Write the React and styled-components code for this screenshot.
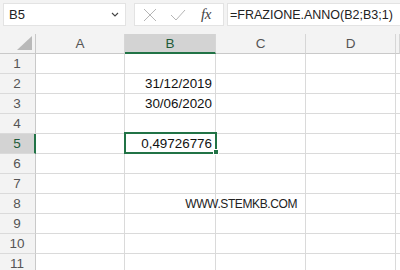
import React from "react";
import styled, { createGlobalStyle } from "styled-components";

const Global = createGlobalStyle`
  html, body { margin: 0; padding: 0; background: #fff; overflow: hidden; }
  * { box-sizing: border-box; }
`;

const GREEN = "#217346";
const FONT = `"Liberation Sans", Arial, sans-serif`;

const Page = styled.div`
  width: 400px;
  height: 270px;
  overflow: hidden;
  font-family: ${FONT};
  background: #fff;
`;

const Toolbar = styled.div`
  height: 34px;
  background: #f3f3f3;
  display: flex;
  align-items: flex-start;
  padding: 3px 0 0 3px;
  gap: 8px;
`;

const Box = styled.div`
  height: 23px;
  background: #fff;
  border: 1px solid #e3e3e3;
  display: flex;
  align-items: center;
`;

const NameBox = styled(Box)`
  width: 123px;
  padding: 0 6px 0 5px;
  justify-content: space-between;
  font-size: 13px;
  color: #222;
`;

const FxBox = styled(Box)`
  width: 90px;
  padding-left: 8px;
  gap: 13px;
`;

const FormulaBox = styled(Box)`
  flex: 1;
  margin-left: -5px;
  padding-left: 2px;
  font-size: 12.5px;
  color: #222;
  border-right: none;
  white-space: nowrap;
`;

const Fx = styled.span`
  font-family: "Liberation Serif", "Times New Roman", serif;
  font-style: italic;
  font-size: 15px;
  color: #444;
  margin-left: 2px;
  letter-spacing: -0.5px;
`;

const Grid = styled.div`
  display: grid;
  grid-template-columns: 36px 89px 91px 90px 90px 4px;
  grid-auto-rows: 20px;
  font-size: 13.4px;
`;

const Corner = styled.div`
  background: #f3f3f3;
  border-right: 1px solid #c9c9c9;
  border-bottom: 1px solid #c9c9c9;
  position: relative;
  &::after {
    content: "";
    position: absolute;
    right: 3px;
    bottom: 3px;
    width: 0;
    height: 0;
    border-left: 15px solid transparent;
    border-bottom: 14px solid #b9b9b9;
  }
`;

const ColHead = styled.div`
  background: ${(p) => (p.$sel ? "#d3d3d3" : "#f3f3f3")};
  border-right: 1px solid #d6d6d6;
  border-bottom: ${(p) => (p.$sel ? `2px solid ${GREEN}` : "1px solid #c9c9c9")};
  color: ${(p) => (p.$sel ? "#1e5b39" : "#555")};
  display: flex;
  align-items: center;
  justify-content: center;
  font-size: 13.5px;
  padding-top: ${(p) => (p.$sel ? "1px" : "0")};
`;

const RowHead = styled.div`
  background: ${(p) => (p.$sel ? "#d3d3d3" : "#f3f3f3")};
  border-right: ${(p) => (p.$sel ? `2px solid ${GREEN}` : "1px solid #c9c9c9")};
  border-bottom: 1px solid #dadada;
  color: ${(p) => (p.$sel ? "#1e5b39" : "#555")};
  display: flex;
  align-items: center;
  justify-content: center;
  font-size: 13.5px;
  padding-right: ${(p) => (p.$sel ? "0" : "1px")};
`;

const Cell = styled.div`
  border-right: 1px solid #dadada;
  border-bottom: 1px solid #dadada;
  display: flex;
  align-items: center;
  justify-content: ${(p) => (p.$right ? "flex-end" : "flex-start")};
  padding: 0 ${(p) => (p.$pad ?? 3)}px 0 3px;
  color: #111;
  white-space: nowrap;
  position: relative;
  z-index: ${(p) => (p.$active ? 2 : "auto")};
`;

const SiteText = styled.span`
  font-size: 12px;
  letter-spacing: -0.4px;
  color: #222;
`;

const Selection = styled.div`
  position: absolute;
  top: -2px;
  left: -1px;
  right: -2px;
  bottom: -1px;
  border: 2px solid ${GREEN};
  pointer-events: none;
`;

const Handle = styled.div`
  position: absolute;
  right: -4px;
  bottom: -3px;
  width: 6px;
  height: 6px;
  background: ${GREEN};
  border: 1px solid #fff;
`;

const cols = ["A", "B", "C", "D", "E"];
const data = {
  "B2": "31/12/2019",
  "B3": "30/06/2020",
  "B5": "0,49726776",
};

export default function App() {
  const rows = Array.from({ length: 11 }, (_, i) => i + 1);
  return (
    <Page>
      <Global />
      <Toolbar>
        <NameBox>
          <span>B5</span>
          <svg width="8" height="5" viewBox="0 0 8 5">
            <path d="M1 1 L4 4 L7 1" fill="none" stroke="#444" strokeWidth="1.1" />
          </svg>
        </NameBox>
        <FxBox>
          <svg width="14" height="14" viewBox="0 0 14 14">
            <path d="M1 1 L13 13 M13 1 L1 13" stroke="#b5b5b5" strokeWidth="1" fill="none" />
          </svg>
          <svg width="16" height="14" viewBox="0 0 16 14">
            <path d="M1 7 L6 12 L15 2" stroke="#b5b5b5" strokeWidth="1" fill="none" />
          </svg>
          <Fx>fx</Fx>
        </FxBox>
        <FormulaBox>=FRAZIONE.ANNO(B2;B3;1)</FormulaBox>
      </Toolbar>
      <Grid>
        <Corner />
        {cols.map((c) => (
          <ColHead key={c} $sel={c === "B"}>{c === "E" ? "" : c}</ColHead>
        ))}
        {rows.map((r) => (
          <React.Fragment key={r}>
            <RowHead $sel={r === 5}>{r}</RowHead>
            {cols.map((c) => {
              const id = c + r;
              const active = id === "B5";
              if (id === "C8") {
                return (
                  <Cell key={id} $right $pad={8}>
                    <SiteText>WWW.STEMKB.COM</SiteText>
                  </Cell>
                );
              }
              return (
                <Cell key={id} $right={!!data[id]} $active={active}>
                  {data[id]}
                  {active && (
                    <Selection>
                      <Handle />
                    </Selection>
                  )}
                </Cell>
              );
            })}
          </React.Fragment>
        ))}
      </Grid>
    </Page>
  );
}
